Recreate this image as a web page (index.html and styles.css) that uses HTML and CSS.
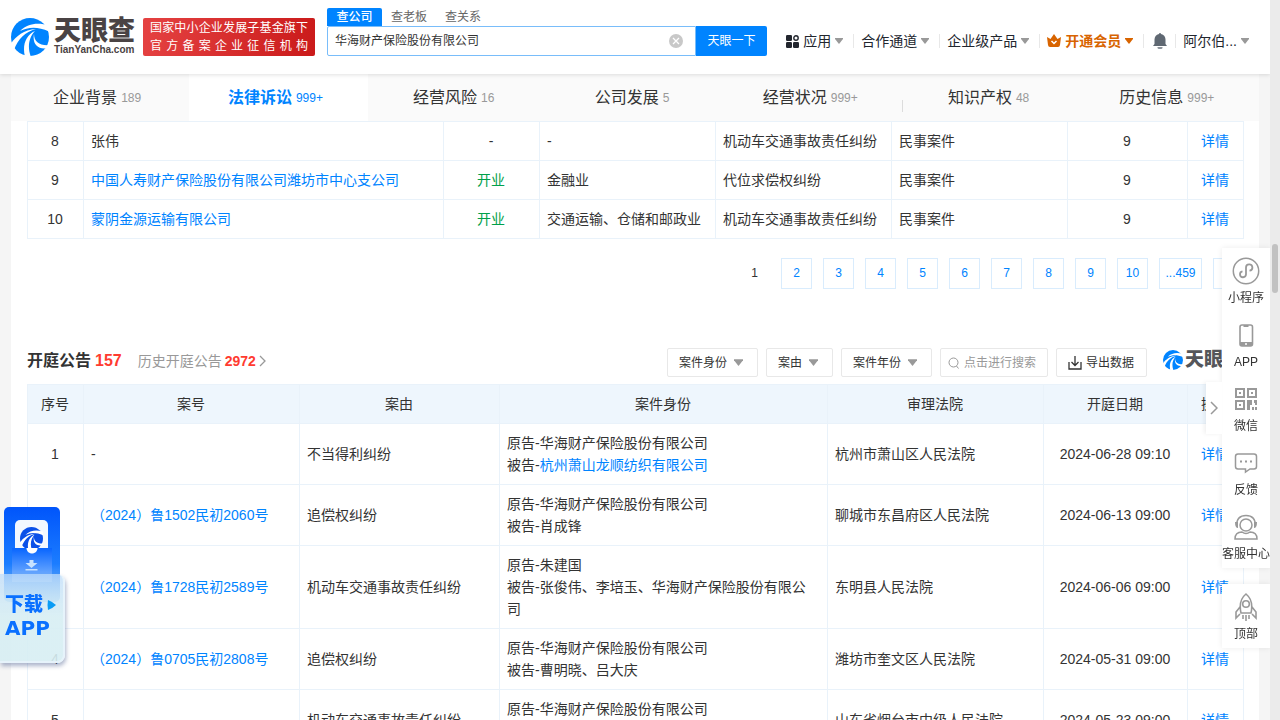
FILE: index.html
```html
<!DOCTYPE html>
<html lang="zh-CN">
<head>
<meta charset="utf-8">
<meta name="viewport" content="width=device-width, initial-scale=1">
<title>华海财产保险股份有限公司 - 天眼查</title>
<link rel="stylesheet" href="styles.css">
</head>
<body>
<svg class="defs" aria-hidden="true">
  <symbol id="swirl" viewBox="0 0 38 38">
    <circle cx="19" cy="19" r="19" fill="currentColor"/>
    <g fill="#fff">
      <path d="M39 8C28 4 17 5 9 13c8-4 18-5 30 1z"/>
      <path d="M-1 27C4 19 12 12 25 11 14 14 7 21 3 32z"/>
      <path d="M14 39C11 27 15 17 24 13c-6 6-8 16-4 26z"/>
      <path d="M23 16c0 8 6 12 16 11l-2 3C27 32 21 26 23 16z"/>
    </g>
  </symbol>
  <symbol id="caret" viewBox="0 0 8 6"><path fill="currentColor" d="M0 0h8v1L4 6 0 1z"/></symbol>
</svg>

<header class="header">
  <a class="logo" href="#" aria-label="天眼查">
    <svg class="logo-mark"><use href="#swirl"/></svg>
    <span class="logo-text"><b class="logo-cn">天眼查</b><b class="logo-en">TianYanCha.com</b></span>
  </a>
  <div class="badge"><span>国家中小企业发展子基金旗下</span><span>官方备案企业征信机构</span></div>
  <form class="search">
    <div class="search-tabs">
      <button type="button" class="search-tab on">查公司</button>
      <button type="button" class="search-tab">查老板</button>
      <button type="button" class="search-tab">查关系</button>
    </div>
    <div class="search-row">
      <div class="search-field">
        <input type="text" aria-label="搜索公司" value="华海财产保险股份有限公司">
        <button type="button" class="clear" aria-label="清除">
          <svg viewBox="0 0 14 14"><circle cx="7" cy="7" r="7" fill="#c8c8c8"/><path d="M4 4l6 6M10 4l-6 6" stroke="#fff" stroke-width="1.3"/></svg>
        </button>
      </div>
      <button type="button" class="search-go">天眼一下</button>
    </div>
  </form>
  <nav class="nav">
    <button class="nav-item"><svg class="i13" viewBox="0 0 13 13"><g fill="#22262e"><rect width="6" height="6" rx="1.2"/><rect y="7" width="6" height="6" rx="1.2"/><rect x="7" y="7" width="6" height="6" rx="1.2"/></g><circle cx="10" cy="3" r="2.2" fill="none" stroke="#22262e" stroke-width="1.4"/></svg>应用<svg class="caret"><use href="#caret"/></svg></button>
    <button class="nav-item">合作通道<svg class="caret"><use href="#caret"/></svg></button>
    <button class="nav-item">企业级产品<svg class="caret"><use href="#caret"/></svg></button>
    <button class="nav-item vip"><svg class="i14" viewBox="0 0 14 14"><path fill="#d86400" d="M0 3l3.5 2L7 0l3.500 5L14 3l-1 8q-.2 2-2 2H3q-1.800 0-2-2z"/><path d="M4.500 7L7 9.500 9.500 7" fill="none" stroke="#fff" stroke-width="1.5"/></svg>开通会员<svg class="caret"><use href="#caret"/></svg></button>
    <button class="nav-item bell" aria-label="消息"><svg class="bell-icon" viewBox="0 0 14 16"><path fill="#5f6872" d="M6 1a1 1 0 0 1 2 0c3 .6 4.500 3 4.500 5.500V11l1.500 2H0l1.500-2V6.500C1.500 4 3 1.600 6 1z"/><path fill="#8a9199" d="M4.500 14h5v.5q0 1.500-1.500 1.500H6q-1.500 0-1.500-1.500z"/></svg></button>
    <button class="nav-item user">阿尔伯...<svg class="caret"><use href="#caret"/></svg></button>
  </nav>
</header>

<main class="page">
  <nav class="tabs">
    <a href="#" class="tab">企业背景<span>189</span></a>
    <a href="#" class="tab on">法律诉讼<span>999+</span></a>
    <a href="#" class="tab">经营风险<span>16</span></a>
    <a href="#" class="tab">公司发展<span>5</span></a>
    <a href="#" class="tab">经营状况<span>999+</span></a>
    <a href="#" class="tab ruled">知识产权<span>48</span></a>
    <a href="#" class="tab">历史信息<span>999+</span></a>
  </nav>

  <section class="content">
    <table class="grid">
      <colgroup><col class="w56"><col><col class="w96"><col class="w176"><col class="w176"><col class="w176"><col class="w120"><col class="w56"></colgroup>
      <tbody>
        <tr><td class="c">8</td><td>张伟</td><td class="c">-</td><td>-</td><td>机动车交通事故责任纠纷</td><td>民事案件</td><td class="c">9</td><td class="c"><a href="#">详情</a></td></tr>
        <tr><td class="c">9</td><td><a href="#">中国人寿财产保险股份有限公司潍坊市中心支公司</a></td><td class="c open">开业</td><td>金融业</td><td>代位求偿权纠纷</td><td>民事案件</td><td class="c">9</td><td class="c"><a href="#">详情</a></td></tr>
        <tr><td class="c">10</td><td><a href="#">蒙阴金源运输有限公司</a></td><td class="c open">开业</td><td>交通运输、仓储和邮政业</td><td>机动车交通事故责任纠纷</td><td>民事案件</td><td class="c">9</td><td class="c"><a href="#">详情</a></td></tr>
      </tbody>
    </table>

    <nav class="pager" aria-label="分页">
      <span class="page-no now">1</span><a class="page-no" href="#">2</a><a class="page-no" href="#">3</a><a class="page-no" href="#">4</a><a class="page-no" href="#">5</a><a class="page-no" href="#">6</a><a class="page-no" href="#">7</a><a class="page-no" href="#">8</a><a class="page-no" href="#">9</a><a class="page-no" href="#">10</a><a class="page-no wide" href="#">...459</a><a class="page-no" href="#" aria-label="下一页"></a>
    </nav>

    <div class="section-head">
      <h2>开庭公告<b>157</b></h2>
      <a class="history" href="#">历史开庭公告<b>2972</b><svg viewBox="0 0 7 12"><path d="M1 1l5 5-5 5" fill="none" stroke="#999" stroke-width="1.300"/></svg></a>
      <div class="tools">
        <label class="box"><select aria-label="案件身份"><option>案件身份</option></select><svg class="drop"><use href="#caret"/></svg></label>
        <label class="box"><select aria-label="案由"><option>案由</option></select><svg class="drop"><use href="#caret"/></svg></label>
        <label class="box"><select aria-label="案件年份"><option>案件年份</option></select><svg class="drop"><use href="#caret"/></svg></label>
        <label class="box find"><svg class="lens" viewBox="0 0 12 12"><circle cx="5.500" cy="5.500" r="4.500" fill="none" stroke="#999"/><path d="M8.500 9l2 2.500" stroke="#999"/></svg><input type="text" aria-label="搜索" placeholder="点击进行搜索"></label>
        <button class="box export"><svg class="i14" viewBox="0 0 14 14"><path d="M1 6v7h12V6M7 0v9M3.500 6L7 9.500 10.500 6" fill="none" stroke="#333" stroke-width="1.300"/></svg>导出数据</button>
        <span class="mini-logo"><svg><use href="#swirl"/></svg><b>天眼查</b></span>
      </div>
    </div>

    <table class="grid">
      <colgroup><col class="w56"><col class="w216"><col class="w200"><col><col class="w216"><col class="w144"><col class="w56"></colgroup>
      <thead><tr><th>序号</th><th>案号</th><th>案由</th><th>案件身份</th><th>审理法院</th><th>开庭日期</th><th>操作</th></tr></thead>
      <tbody>
        <tr><td class="c">1</td><td>-</td><td>不当得利纠纷</td><td>原告-华海财产保险股份有限公司<br>被告-<a href="#">杭州萧山龙顺纺织有限公司</a></td><td>杭州市萧山区人民法院</td><td class="c">2024-06-28 09:10</td><td class="c"><a href="#">详情</a></td></tr>
        <tr><td class="c">2</td><td><a href="#">（2024）鲁1502民初2060号</a></td><td>追偿权纠纷</td><td>原告-华海财产保险股份有限公司<br>被告-肖成锋</td><td>聊城市东昌府区人民法院</td><td class="c">2024-06-13 09:00</td><td class="c"><a href="#">详情</a></td></tr>
        <tr><td class="c">3</td><td><a href="#">（2024）鲁1728民初2589号</a></td><td>机动车交通事故责任纠纷</td><td>原告-朱建国<br>被告-张俊伟、李培玉、华海财产保险股份有限公司</td><td>东明县人民法院</td><td class="c">2024-06-06 09:00</td><td class="c"><a href="#">详情</a></td></tr>
        <tr><td class="c">4</td><td><a href="#">（2024）鲁0705民初2808号</a></td><td>追偿权纠纷</td><td>原告-华海财产保险股份有限公司<br>被告-曹明晓、吕大庆</td><td>潍坊市奎文区人民法院</td><td class="c">2024-05-31 09:00</td><td class="c"><a href="#">详情</a></td></tr>
        <tr><td class="c">5</td><td>-</td><td>机动车交通事故责任纠纷</td><td>原告-华海财产保险股份有限公司<br>被告-</td><td>山东省烟台市中级人民法院</td><td class="c">2024-05-23 09:00</td><td class="c"><a href="#">详情</a></td></tr>
      </tbody>
    </table>
  </section>
</main>

<a class="app-float" href="#" aria-label="下载APP">
  <span class="app-card">
    <span class="app-tile"><svg><use href="#swirl"/></svg></span>
    <span class="app-pocket"><svg viewBox="0 0 12 11"><path fill="#c8e2ff" d="M4 0h4v3h4L6 8 0 3h4zM0 9h12v1.500H0z"/></svg></span>
  </span>
  <span class="app-glass"><span class="app-cn">下载<svg viewBox="0 0 9 10"><path fill="#0a9cf5" d="M1 0q5 2 8 5-3 3-8 5-1-5 0-10z"/></svg></span><span class="app-en">APP</span></span>
</a>

<aside class="side">
  <button class="side-toggle" aria-label="收起"><svg viewBox="0 0 8 14"><path d="M1 1l6 6-6 6" fill="none" stroke="#999" stroke-width="1.500"/></svg></button>
  <div class="side-panel">
    <button class="side-item"><svg viewBox="0 0 28 28"><g fill="none" stroke="#999"><circle cx="14" cy="14" r="12.700" stroke-width="1.500"/><path stroke-width="1.800" d="M10.500 14.300a3 3 0 1 0 3.500 3V10.500a3.200 3.200 0 1 1 3.500 3.200"/></g></svg>小程序</button>
    <button class="side-item"><svg viewBox="0 0 28 28"><rect x="8" y="4" width="12.500" height="21" rx="2" fill="none" stroke="#999" stroke-width="1.600"/><path fill="#999" d="M8 21h12v4H8zM11.500 4h5v2h-5z"/><circle cx="14" cy="23" r="1" fill="#fff"/></svg>APP</button>
    <button class="side-item"><svg viewBox="0 0 28 28"><g fill="none" stroke="#999" stroke-width="2"><rect x="4" y="4" width="8" height="8"/><rect x="16" y="4" width="8" height="8"/><rect x="4" y="16" width="8" height="8"/></g><path fill="#999" d="M7 7h2v2H7zM19 7h2v2h-2zM7 19h2v2H7zM15 15h5v5h-2v5h-3zM22 15h3v5h-2v-2h-1zM20 22h2v3h-2zM23 22h2v3h-2z"/></svg>微信</button>
    <button class="side-item"><svg viewBox="0 0 28 28"><path d="M6 5h16q2.500 0 2.500 2.500v10q0 2.500-2.500 2.500h-4l-4.500 3v-3H6q-2.500 0-2.500-2.500v-10Q3.500 5 6 5z" fill="none" stroke="#999" stroke-width="1.500"/><path fill="#999" d="M8 11.500h2v2H8zM13 11.500h2v2h-2zM18 11.500h2v2h-2z"/></svg>反馈</button>
    <button class="side-item"><svg viewBox="0 0 28 28"><g fill="none" stroke="#999" stroke-width="1.500"><circle cx="14" cy="12" r="6"/><path d="M5 13C4 6 8 2.500 14 2.500S24 6 23 13M3 26c0-5 3-7 7-7q4 3 8 0c4 0 7 2 7 7z"/></g><path fill="#999" d="M3 9h3v6Q3 15 3 9zM25 9h-3v6q3 0 3-6z"/></svg>客服中心</button>
  </div>
  <div class="side-panel">
    <button class="side-item"><svg viewBox="0 0 28 28"><g fill="none" stroke="#999" stroke-width="1.600"><path d="M9 20C7 11 9 5 14 1c5 4 7 10 5 19zM8 14l-4 5v6l4-4M20 14l4 5v6l-4-4M11 22v4M14 22v6M17 22v4"/><circle cx="14" cy="11" r="3.300"/></g></svg>顶部</button>
  </div>
</aside>
<div class="scrollbar" aria-hidden="true"><span></span></div>
</body>
</html>
```
FILE: styles.css
```css
* { box-sizing: border-box; }
html, body { height: 100%; }
body {
  margin: 0;
  padding-right: 10px;
  overflow: hidden;
  background: #f5f5f5;
  color: #333;
  font: 14px/22px "Liberation Sans", "Noto Sans CJK SC", sans-serif;
}
a { color: #0084ff; text-decoration: none; }
button, input, select { font: inherit; color: inherit; background: none; border: 0; padding: 0; margin: 0; outline: 0; }
button { cursor: pointer; }
svg { display: block; flex: none; }
.defs { position: absolute; width: 0; height: 0; }

/* header */
.header {
  position: relative;
  z-index: 2;
  display: flex;
  align-items: flex-start;
  height: 74px;
  padding: 8px 11px 0;
  background: #fff;
  box-shadow: 0 1px 4px rgba(0, 0, 0, .12);
}
.logo { display: flex; gap: 5px; margin-top: 10px; color: #0084ff; }
.logo-mark { width: 38px; height: 38px; }
.logo-text { display: flex; flex-direction: column; width: 84px; color: #4a4344; }
.logo-cn { font-size: 27px; line-height: 26px; font-weight: 900; }
.logo-en { font-size: 10px; line-height: 12px; }
.badge {
  width: 172px;
  height: 38px;
  margin: 10px 12px 0 5px;
  padding: 1px 7px;
  border-radius: 2px;
  background: linear-gradient(100deg, #e54242, #ca1a1a);
  color: #fff;
  font-size: 12px;
  line-height: 18px;
}
.badge span { display: block; text-align-last: justify; }
.search { width: 440px; font-size: 12px; }
.search-tabs { display: flex; line-height: 18px; }
.search-tab { height: 18px; padding: 0 9px; color: #666; }
.search-tab.on { width: 55px; background: #0084ff; color: #fff; border-radius: 2px 2px 0 0; font-weight: 500; }
.search-row { display: flex; height: 30px; }
.search-field { flex: 1; display: flex; align-items: center; padding: 0 12px 0 7px; border: 1px solid #79bdfa; border-radius: 2px 0 0 2px; }
.search-field input { flex: 1; min-width: 0; }
.clear svg { width: 14px; height: 14px; }
.search-go { width: 71px; background: #0084ff; color: #fff; border-radius: 0 2px 2px 0; }
.nav { display: flex; align-items: center; margin: 26px 10px 0 auto; line-height: 14px; color: #22262e; white-space: nowrap; }
.nav-item { display: flex; align-items: center; gap: 4px; height: 14px; padding: 0 10px 0 7px; border-right: 1px solid #e8e8e8; }
.nav-item:last-child { padding-right: 0; border: 0; }
.caret { width: 8px; height: 6px; color: #999; }
.vip, .vip .caret { color: #d86400; font-weight: 700; }
.bell { padding: 0 8px 0 9px; }
.bell-icon { width: 14px; height: 16px; }
.i13 { width: 13px; height: 13px; }
.i14 { width: 14px; height: 14px; }

/* company tabs */
.page { margin: 0 11px; background: #fff; }
.tabs { display: grid; grid-template-columns: repeat(7, 1fr); background: #fafafa; }
.tab { display: flex; justify-content: center; align-items: center; gap: 4px; height: 47px; padding-right: 6px; color: #333; font-size: 16px; }
.tab span { font-size: 12px; color: #999; }
.tab.on { background: #fff; color: #0084ff; font-weight: 700; }
.tab.on span { color: #0084ff; font-weight: 400; }
.tab.ruled { background: linear-gradient(#dcdcdc, #dcdcdc) 0 75% / 1px 12px no-repeat; }
.content { padding: 0 15px 0 16px; }

/* tables */
.grid { width: 100%; table-layout: fixed; border-collapse: collapse; }
.grid th, .grid td { border: 1px solid #e9f2fa; padding: 8px 8px 8px 7px; text-align: left; font-weight: 400; }
.grid th { background: #eef6fd; text-align: center; }
.grid td.c { text-align: center; }
.grid .open { color: #00a04a; }
.w56 { width: 56px; }
.w96 { width: 96px; }
.w120 { width: 120px; }
.w144 { width: 144px; }
.w176 { width: 176px; }
.w200 { width: 200px; }
.w216 { width: 216px; }

/* pagination */
.pager { display: flex; justify-content: flex-end; gap: 11px; margin: 19px 0 0; font-size: 12px; }
.page-no { width: 31px; height: 31px; border: 1px solid #d9ecfd; line-height: 29px; text-align: center; }
.page-no.now { border-color: transparent; }
.page-no.wide { width: 43px; }

/* section heading */
.section-head { display: flex; align-items: center; height: 29px; margin: 59px 0 7px; white-space: nowrap; }
.section-head h2 { display: flex; gap: 4px; margin: 0 16px 4px 0; font-size: 16px; font-weight: 700; }
.section-head h2 b, .history b { color: #ff3b30; }
.history { display: flex; align-items: center; gap: 3px; margin-bottom: 4px; color: #999; }
.history svg { width: 7px; height: 12px; }
.tools { display: flex; gap: 8px; margin-left: auto; font-size: 12px; }
.box { display: flex; align-items: center; height: 29px; padding: 0 14px 0 11px; border: 1px solid #e8e8e8; border-radius: 2px; }
.box select { appearance: none; }
.drop { width: 9px; height: 7px; margin-left: 6px; color: #999; }
.box.find { width: 108px; gap: 4px; padding: 0 7px; }
.find input { flex: 1; min-width: 0; }
.find input::placeholder { color: #999; opacity: 1; }
.lens { width: 12px; height: 12px; }
.box.export { gap: 4px; padding: 0 12px 0 11px; }
.mini-logo { display: flex; align-items: center; gap: 2px; margin: 0 2px 0 8px; color: #0084ff; height: 24px; }
.mini-logo svg { width: 20px; height: 20px; }
.mini-logo b { font-size: 19px; font-weight: 900; color: #55565a; }

/* floating side bar */
.side { position: fixed; z-index: 3; right: 10px; top: 248px; width: 48px; display: grid; gap: 16px; font-size: 12px; }
.side-panel { background: #fff; box-shadow: 0 0 6px rgba(0, 0, 0, .08); }
.side-item { display: flex; flex-direction: column; align-items: center; width: 48px; height: 64px; padding-top: 9px; line-height: 26px; white-space: nowrap; }
.side-item svg { width: 28px; height: 28px; }
.side-toggle { position: absolute; left: -16px; top: 134px; width: 16px; height: 52px; padding-left: 4px; background: #fff; box-shadow: -2px 0 4px rgba(0, 0, 0, .06); }
.side-toggle svg { width: 8px; height: 14px; }

/* app download float */
.app-float { position: fixed; z-index: 3; left: 0; top: 507px; width: 66px; height: 158px; }
.app-card { position: absolute; left: 4px; top: 0; width: 56px; height: 95px; border-radius: 5px; background: linear-gradient(#0055fb, #1c7dff 60%, #9acbf7); }
.app-tile { position: absolute; left: 11px; top: 13px; width: 33px; height: 34px; padding: 7px 5px; border-radius: 5px; background: #f3f8ff; color: #0b50e8; }
.app-tile svg { width: 23px; height: 23px; }
.app-pocket { position: absolute; left: 8px; top: 41px; width: 40px; height: 34px; padding: 12px 13px; background: radial-gradient(circle at 50% 0, #fff 5px, transparent 6px), linear-gradient(#0865ff, #86bcff); }
.app-pocket svg { width: 13px; height: 11px; }
.app-glass { position: absolute; left: 0; top: 67px; width: 65px; height: 89px; padding: 20px 0 0 5px; border-radius: 0 8px 8px 0; background: linear-gradient(rgba(190, 220, 250, .75), rgba(215, 238, 243, .9) 50%); border-right: 2px solid #e6f3fb; border-bottom: 2px solid #e6f3fb; box-shadow: 1px 3px 4px rgba(70, 90, 140, .45); color: #0a70ff; }
.app-cn { display: flex; align-items: center; gap: 4px; font-size: 19px; font-weight: 900; }
.app-cn svg { width: 9px; height: 10px; }
.app-en { display: block; font: 700 20px/24px "DejaVu Sans", sans-serif; }

/* page scrollbar */
.scrollbar { position: fixed; z-index: 4; top: 0; right: 0; bottom: 0; width: 10px; padding: 244px 2px 0; background: #ebebeb; }
.scrollbar span { display: block; height: 49px; border-radius: 3px; background: #c1c1c1; }
```
